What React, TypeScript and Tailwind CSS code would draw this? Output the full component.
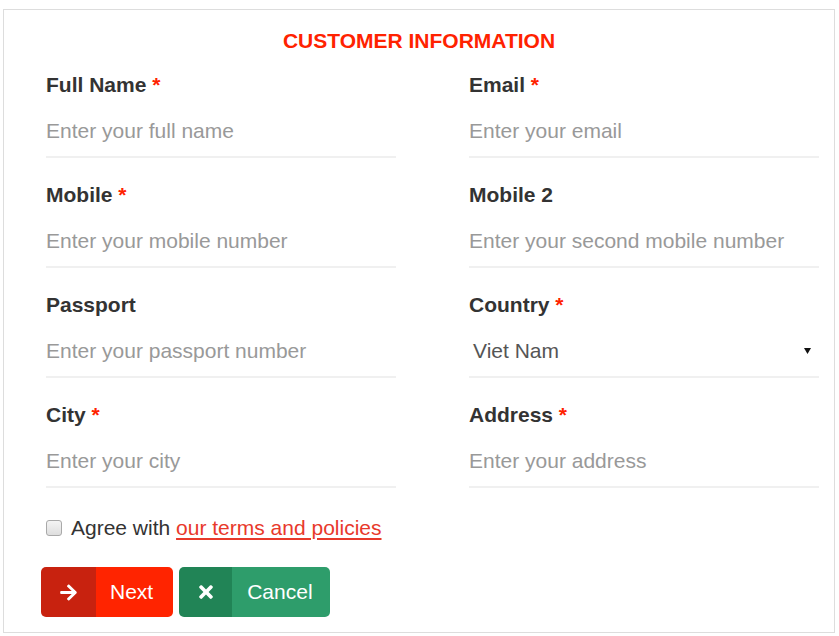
import React from "react";
import { FaArrowRight, FaTimes } from "react-icons/fa";

type F = { label: string; req?: boolean; ph?: string; select?: string };

const rows: [F, F][] = [
  [
    { label: "Full Name", req: true, ph: "Enter your full name" },
    { label: "Email", req: true, ph: "Enter your email" },
  ],
  [
    { label: "Mobile", req: true, ph: "Enter your mobile number" },
    { label: "Mobile 2", ph: "Enter your second mobile number" },
  ],
  [
    { label: "Passport", ph: "Enter your passport number" },
    { label: "Country", req: true, select: "Viet Nam" },
  ],
  [
    { label: "City", req: true, ph: "Enter your city" },
    { label: "Address", req: true, ph: "Enter your address" },
  ],
];

function Field({ f }: { f: F }) {
  return (
    <div className="w-[350px] h-[110px]">
      <div className="h-[30px] leading-[30px] font-bold text-[#333]">
        {f.label}
        {f.req && <span className="text-[#ff2200]"> *</span>}
      </div>
      <div className="mt-[6px] h-[52px] border-b-2 border-[#f0f0f0] flex items-center">
        {f.select ? (
          <div className="flex items-center justify-between w-full pl-[4px] pr-[8px] text-[#555]">
            <span>{f.select}</span>
            <svg width="7" height="6" viewBox="0 0 7 6">
              <path d="M0 0 H7 L3.5 6 Z" fill="#111" />
            </svg>
          </div>
        ) : (
          <span className="text-[#999]">{f.ph}</span>
        )}
      </div>
    </div>
  );
}

export default function App() {
  return (
    <div className="bg-white w-[839px] h-[636px] pt-[9px] pl-[3px] text-[21px]" style={{ fontFamily: '"Liberation Sans", Arial, sans-serif' }}>
      <div className="w-[832px] h-[624px] border border-[#dddddd] flex flex-col">
        <div className="pt-[16px] leading-[30px] text-center font-bold text-[#ff2200]">
          CUSTOMER INFORMATION
        </div>
        <div className="mt-[14px] pl-[42px] flex flex-col">
          {rows.map((r, i) => (
            <div key={i} className="flex gap-[73px]">
              <Field f={r[0]} />
              <Field f={r[1]} />
            </div>
          ))}
          <div className="h-[36px] flex items-center">
            <div className="w-[16px] h-[16px] rounded-[3px] border border-[#a9a9a9] bg-gradient-to-b from-[#f4f4f4] to-[#dedede]" />
            <span className="ml-[9px] text-[#333]">
              Agree with{" "}
              <span className="text-[#e8392b] underline decoration-[#e8392b] underline-offset-[3px]">our terms and policies</span>
            </span>
          </div>
          <div className="mt-[21px] -ml-[5px] flex gap-[6px]">
            <div className="flex h-[50px] rounded-[5px] overflow-hidden text-white">
              <div className="w-[55px] bg-[#c8220f] flex items-center justify-center">
                <FaArrowRight className="w-[19px] h-[19px]" />
              </div>
              <div className="bg-[#ff2400] pl-[14px] pr-[20px] flex items-center">Next</div>
            </div>
            <div className="flex h-[50px] rounded-[5px] overflow-hidden text-white">
              <div className="w-[53px] bg-[#218456] flex items-center justify-center">
                <FaTimes className="w-[20px] h-[20px]" />
              </div>
              <div className="bg-[#2e9d6b] pl-[15px] pr-[17px] flex items-center">Cancel</div>
            </div>
          </div>
        </div>
      </div>
    </div>
  );
}
